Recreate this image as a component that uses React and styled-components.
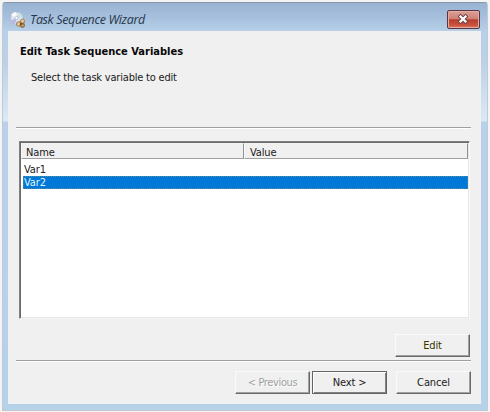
import React from "react";
import styled, { createGlobalStyle, css } from "styled-components";

const GlobalStyle = createGlobalStyle`
  * { box-sizing: border-box; }
  body {
    margin: 0;
    background: #f4f4f4;
    font-family: "DejaVu Sans Condensed", "DejaVu Sans", sans-serif;
    font-stretch: condensed;
    font-size: 11px;
    letter-spacing: -0.12px;
    color: #202020;
    overflow: hidden;
  }
`;

const Desktop = styled.div`
  width: 490px;
  height: 412px;
  padding: 2px;
`;

const Window = styled.div`
  display: flex;
  flex-direction: column;
  width: 486px;
  height: 409px;
  padding: 0 6px 6px 5px;
  border: 1px solid #bccbd8;
  border-top-color: #8799a8;
  border-bottom-color: #c3cbd0;
  border-radius: 3px 3px 0 0;
  background: linear-gradient(180deg, #99b4d2 0, #a5bfdd 14px, #b8d0e8 28px, #bdd1e6 60px, #dce9f5 118px, #b9d1e8 119px, #b5d2e9 100%);
`;

const TitleBar = styled.header`
  display: flex;
  align-items: flex-start;
  height: 28px;
  flex: none;
`;

const TitleIcon = styled.svg`
  width: 18px;
  height: 18px;
  margin: 8px 0 0 1px;
  flex: none;
`;

const Title = styled.h1`
  flex: 1;
  margin: 8px 0 0 3px;
  font: italic 400 12.5px/18px "Open Sans", "Noto Sans", sans-serif;
  letter-spacing: -0.36px;
  color: #26374a;
`;

const CloseButton = styled.button`
  display: flex;
  align-items: center;
  justify-content: center;
  width: 33px;
  height: 19px;
  margin: 7px 1px 0 0;
  padding: 0 2px 1px 0;
  border: 1px solid #5b3444;
  border-radius: 2px;
  background: linear-gradient(180deg, #dba096 0, #cf8175 45%, #b83d2c 52%, #c9523c 80%, #d9735a 100%);
  box-shadow: inset 0 0 0 1px #e3ada3;
`;

const Client = styled.main`
  display: flex;
  flex-direction: column;
  flex: 1;
  padding: 14px 10px 0 8px;
  background: #f0f0f0;
`;

const Intro = styled.section`
  height: 82px;
  padding-left: 4px;
`;

const Heading = styled.h2`
  margin: 0;
  font-size: 11px;
  font-weight: 700;
  line-height: 14px;
  letter-spacing: 0.01px;
  color: #080808;
  white-space: nowrap;
`;

const Description = styled.p`
  margin: 12px 0 0 11px;
  line-height: 14px;
  letter-spacing: -0.2px;
`;

const Rule = styled.div`
  height: 2px;
  flex: none;
  border-top: 1px solid #a0a0a0;
  background: #fff;
`;

const ListView = styled.div`
  height: 178px;
  flex: none;
  margin: 12px 1px 0 3px;
  border: 1px solid;
  border-color: #808080 #f9f9f9 #f2f2f2 #808080;
  background: #fff;
  box-shadow: inset 1px 1px 0 #696969, inset -1px -1px 0 #e7e7e7;
  padding: 1px 1px 2px 1px;
`;

const ListHeader = styled.div`
  display: grid;
  grid-template-columns: 223px 224px;
  height: 16px;
  margin-bottom: 4px;
  background: #f0f0f0;
`;

const HeaderCell = styled.div`
  height: 16px;
  padding-left: 4px;
  line-height: 18px;
  border: 1px solid;
  border-color: #f5f5f5 #909090 #a0a0a0 #fafafa;
  &:last-child { padding-left: 5px; }
`;

const ListRow = styled.div`
  height: 13px;
  margin: 0 0 0 2px;
  padding-left: 1px;
  line-height: 14px;
  ${({ $selected }) => $selected && css`
    color: #dff6ff;
    background: #0078d7;
    outline: 1px dotted #5b8a9e;
    outline-offset: -1px;
  `}
`;

const EditRow = styled.div`
  display: flex;
  justify-content: flex-end;
  margin: 15px 1px 3px 0;
`;

const Actions = styled.footer`
  display: flex;
  justify-content: flex-end;
  margin-top: 9px;
`;

const Button = styled.button`
  width: 75px;
  height: 23px;
  margin-left: ${({ $gap = 0 }) => $gap}px;
  padding: 0;
  font: inherit;
  letter-spacing: ${({ $tracking = -0.12 }) => $tracking}px;
  line-height: 21px;
  color: ${({ $accent }) => ($accent ? "#343400" : "#202020")};
  background: #f0f0f0;
  border: 1px solid;
  border-color: #fafafa #696969 #696969 #fafafa;
  box-shadow: inset -1px -1px 0 #a0a0a0;
  ${({ $default }) => $default && css`
    border-color: #646464;
    box-shadow: inset 1px 1px 0 #fff, inset -1px -1px 0 #808080;
  `}
  &:disabled {
    color: #a0a0a0;
    text-shadow: 1px 1px 0 #fff;
  }
`;

function WizardIcon() {
  return (
    <TitleIcon viewBox="0 0 18 18">
      <circle cx="7.8" cy="7.3" r="6.3" fill="#dce5f1" stroke="#a1b0c4" strokeWidth=".6" />
      <path d="M7.8 7.3 2 4Q4 1 7 .9Z" fill="#f9fbff" />
      <path d="M7.8 7.3 1.6 9.5Q3 13 6 13Z" fill="#b8b8e2" />
      <path d="M7.8 7.3 10 1.2Q13 3 13.5 5.5Z" fill="#c9e0df" />
      <circle cx="7.5" cy="7" r="1.6" fill="#f8faff" stroke="#9daac3" strokeWidth=".6" />
      <path d="m7 13 5-4 4 2-1 4-4 1Z" fill="#bc9464" />
      <circle cx="9.5" cy="13" r="2.2" fill="#e4c18a" stroke="#927452" strokeWidth=".8" />
      <circle cx="13.5" cy="10" r="2" fill="#eccb99" stroke="#9d7547" strokeWidth=".8" />
      <circle cx="13.5" cy="14.5" r="2" fill="#c29257" stroke="#705a43" strokeWidth=".8" />
      <path d="M11 12h2v2h-2Z" fill="#684f3a" />
    </TitleIcon>
  );
}

function CloseIcon() {
  return (
    <svg width="12" height="10" viewBox="0 0 12 10">
      <path d="m3.5 2.5 5 5m0-5-5 5" stroke="#68444d" strokeWidth="4" strokeLinecap="square" />
      <path d="m3.5 2.5 5 5m0-5-5 5" stroke="#fff" strokeWidth="2.2" strokeLinecap="square" />
    </svg>
  );
}

export default function App() {
  return (
    <Desktop>
      <GlobalStyle />
      <Window>
        <TitleBar>
          <WizardIcon />
          <Title>Task Sequence Wizard</Title>
          <CloseButton aria-label="Close"><CloseIcon /></CloseButton>
        </TitleBar>
        <Client>
          <Intro>
            <Heading>Edit Task Sequence Variables</Heading>
            <Description>Select the task variable to edit</Description>
          </Intro>
          <Rule />
          <ListView>
            <ListHeader>
              <HeaderCell>Name</HeaderCell>
              <HeaderCell>Value</HeaderCell>
            </ListHeader>
            <ListRow>Var1</ListRow>
            <ListRow $selected>Var2</ListRow>
          </ListView>
          <EditRow><Button $accent>Edit</Button></EditRow>
          <Rule />
          <Actions>
            <Button disabled $tracking={-0.35}>&lt; Previous</Button>
            <Button $default $gap={2}>Next &gt;</Button>
            <Button $gap={9}>Cancel</Button>
          </Actions>
        </Client>
      </Window>
    </Desktop>
  );
}
